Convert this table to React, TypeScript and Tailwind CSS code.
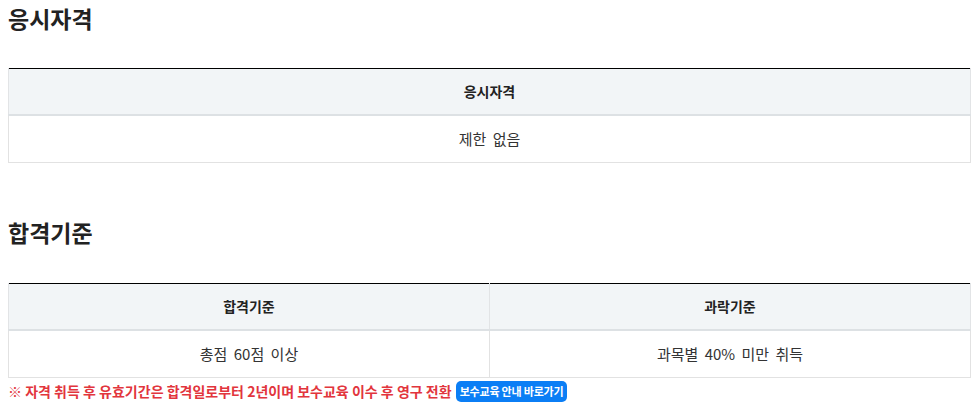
const font = { fontFamily: '"Noto Sans CJK KR", "Noto Sans", sans-serif' };

const Heading = ({ children }: { children: React.ReactNode }) => (
  <h2 className="text-[23px] leading-[36px] font-bold text-[#222]">{children}</h2>
);

const InfoTable = ({ heads, cells }: { heads: string[]; cells: string[] }) => (
  <table className="w-full border-collapse table-fixed border-t border-t-black text-[#222]">
    <thead>
      <tr className="bg-[#f2f5f7]">
        {heads.map((h) => (
          <th
            key={h}
            className="h-[46px] border-x border-x-[#e2e4e6] border-b-2 border-b-[#dde1e4] text-[14px] font-bold text-center"
          >
            {h}
          </th>
        ))}
      </tr>
    </thead>
    <tbody>
      <tr>
        {cells.map((c) => (
          <td
            key={c}
            className="h-[48px] border border-[#e2e2e2] text-center text-[15px] font-normal text-[#333] [word-spacing:3px]"
          >
            {c}
          </td>
        ))}
      </tr>
    </tbody>
  </table>
);

export default function App() {
  return (
    <div className="bg-white min-h-[406px] pl-2 pr-[2px]" style={font}>
      <section>
        <Heading>응시자격</Heading>
        <div className="mt-8">
          <InfoTable heads={["응시자격"]} cells={["제한 없음"]} />
        </div>
      </section>

      <section className="mt-[51px]">
        <Heading>합격기준</Heading>
        <div className="mt-[33px]">
          <InfoTable heads={["합격기준", "과락기준"]} cells={["총점 60점 이상", "과목별 40% 미만 취득"]} />
        </div>
        <div className="mt-[2px] flex items-center gap-[4px] h-[22px]">
          <p className="text-[14px] font-bold text-[#e2353d]">
            ※ 자격 취득 후 유효기간은 합격일로부터 2년이며 보수교육 이수 후 영구 전환
          </p>
          <a
            href="#"
            className="inline-flex items-center h-[21px] px-[4px] rounded-[5px] bg-[#0b7ef5] text-white text-[11px] font-bold tracking-[-0.2px]"
          >
            보수교육 안내 바로가기
          </a>
        </div>
      </section>
    </div>
  );
}
